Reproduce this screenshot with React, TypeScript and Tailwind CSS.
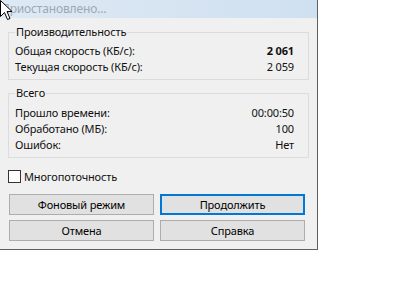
const font = { fontFamily: '"Noto Sans", "Open Sans", sans-serif' };

function Row({ label, value, bold }: { label: string; value: string; bold?: boolean }) {
  return (
    <div className="flex h-4 items-center justify-between leading-4">
      <span>{label}</span>
      <span className={bold ? "font-bold" : ""}>{value}</span>
    </div>
  );
}

function Group({ title, children, className }: { title: string; children: React.ReactNode; className?: string }) {
  return (
    <fieldset className={`mx-[8px] border border-[#dcdcdc] px-[6px] pr-[14px] ${className ?? ""}`}>
      <legend className="px-[1px] leading-4">{title}</legend>
      {children}
    </fieldset>
  );
}

function Button({ label, focused }: { label: string; focused?: boolean }) {
  return (
    <button
      className={`flex h-[21px] w-[145px] items-center justify-center bg-[#e1e1e1] leading-4 text-black ${
        focused ? "border-2 border-[#0078d7]" : "border border-[#adadad]"
      }`}
    >
      {label}
    </button>
  );
}

export default function App() {
  return (
    <div
      className="relative h-[284px] w-[405px] overflow-hidden bg-white text-[11px] tracking-[-0.15px] text-[#111]"
      style={font}
    >
      <div className="flex h-[250px] w-[318px] flex-col border-r border-b border-[#5f5f5f] bg-[#f0f0f0]">
        {/* title bar */}
        <div className="flex h-[18px] items-center bg-gradient-to-r from-[#dfe9f3] to-[#cfe0f1] pl-[1px] text-[12px] text-[#9aa9b8]">
          Приостановлено...
        </div>

        <Group title="Производительность" className="mt-[6px] pb-[4px] pt-[3px]">
          <Row label="Общая скорость (КБ/с):" value="2 061" bold />
          <Row label="Текущая скорость (КБ/с):" value="2 059" />
        </Group>

        <Group title="Всего" className="mt-[5px] pb-[4px] pt-[4px]">
          <Row label="Прошло времени:" value="00:00:50" />
          <Row label="Обработано (МБ):" value="100" />
          <Row label="Ошибок:" value="Нет" />
        </Group>

        <label className="ml-[8px] mt-[12px] flex h-[13px] items-center gap-[3px]">
          <span className="h-[13px] w-[13px] border border-[#333] bg-white" />
          <span className="leading-4">Многопоточность</span>
        </label>

        <div className="ml-[9px] mt-[11px] grid w-[296px] grid-cols-2 gap-x-[6px] gap-y-[5px]">
          <Button label="Фоновый режим" />
          <Button label="Продолжить" focused />
          <Button label="Отмена" />
          <Button label="Справка" />
        </div>
      </div>

      {/* mouse cursor */}
      <svg className="absolute left-0 top-0" width="13" height="21" viewBox="0 0 13 21">
        <path d="M0.5 0.5 L0.5 16.5 L4.5 12.5 L7.5 19.5 L10 18.5 L7 11.5 L12 11.5 Z" fill="#fff" stroke="#000" strokeWidth="1" />
      </svg>
    </div>
  );
}
